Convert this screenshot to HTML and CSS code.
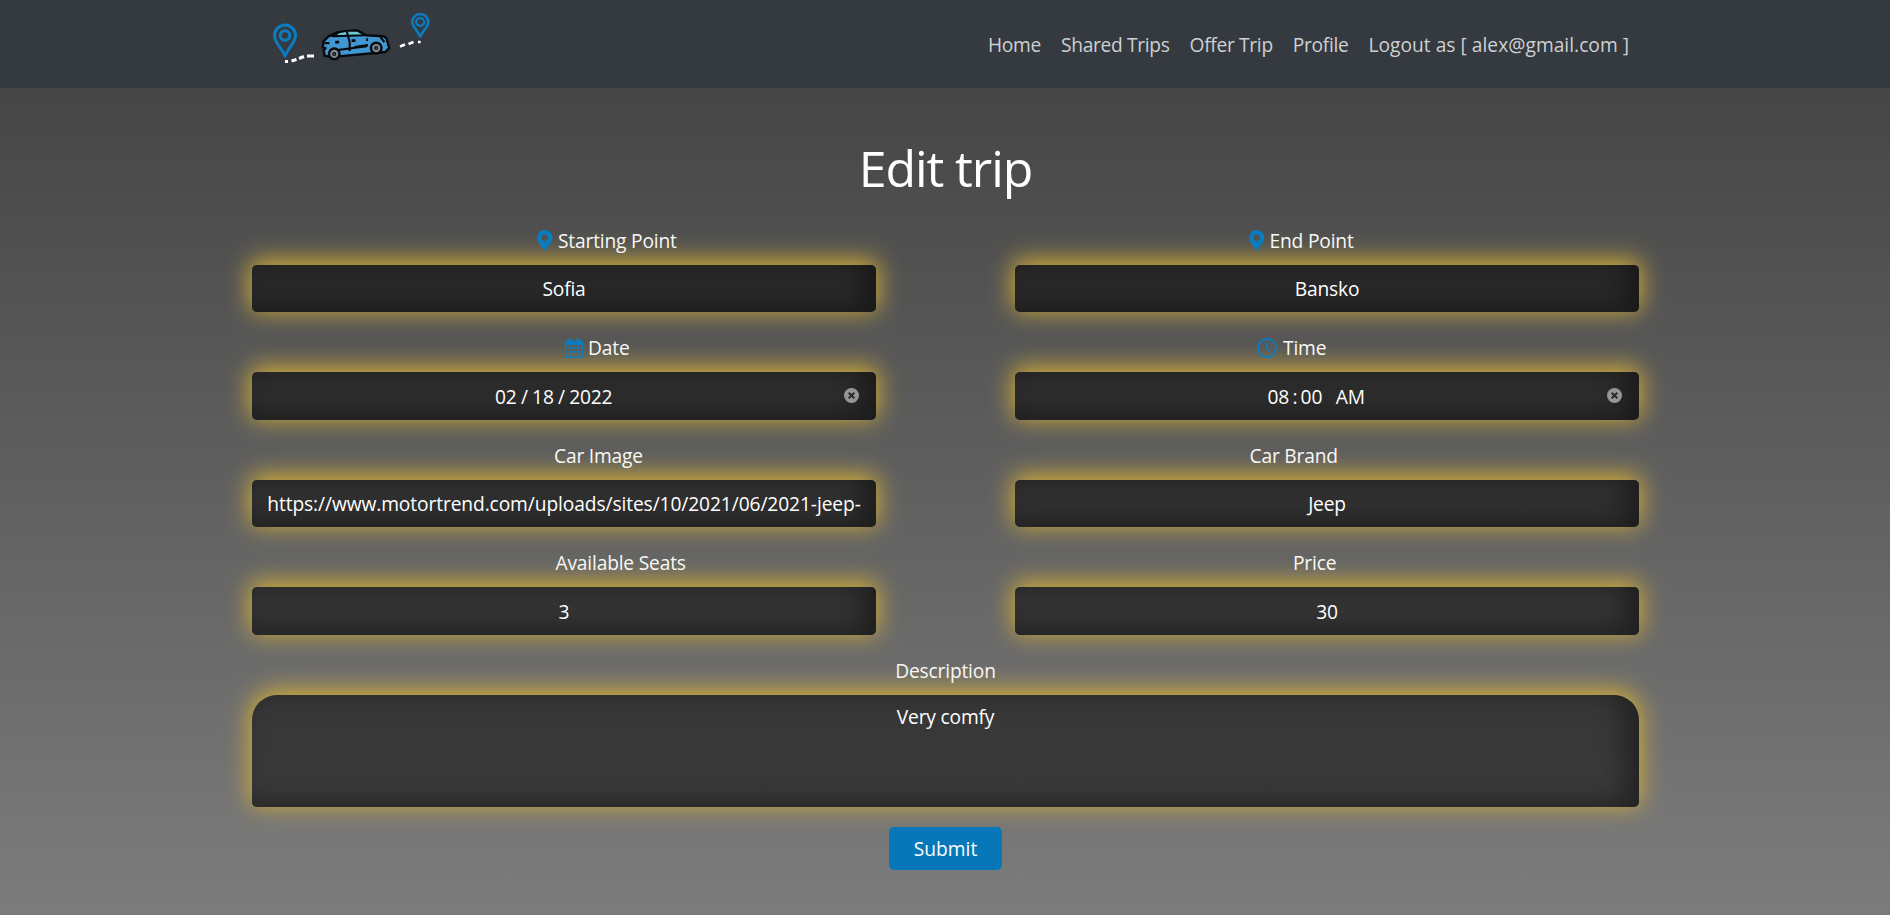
FILE: index.html
```
<!DOCTYPE html>
<html lang="en">
<head>
<meta charset="utf-8">
<title>Edit trip</title>
<link rel="stylesheet" href="styles.css">
</head>
<body>
<header class="header">
  <svg class="logo" width="170" height="70" viewBox="0 0 170 70">
    <g fill="none" stroke="#0a7dc2" stroke-width="3" stroke-linejoin="round">
      <path d="M15 56C12 48 4.500 43 4.500 35.500a10.500 10.500 0 0 1 21 0C25.500 43 18 48 15 56z"/>
      <circle cx="15" cy="35.500" r="4.800"/>
      <path stroke-width="2.600" d="M150.200 36.500C148 31 142.300 27 142.300 22a8 8 0 0 1 16 0C158.300 27 152.500 31 150.200 36.500z"/>
      <circle stroke-width="2.400" cx="150.200" cy="22" r="3.900"/>
    </g>
    <g fill="none" stroke="#fff" stroke-width="3">
      <path d="M15 61.500h3M21.500 61l5-1.500M29 58.500l5-2M37 56l7 0"/>
      <path stroke-width="2.600" d="M130 46.500l5-2M138.500 44l5-2M148 42h2.600"/>
    </g>
    <g stroke="#070b0f" stroke-width="2.500" stroke-linejoin="round" transform="translate(2.500 1) scale(.965 .98)">
      <path fill="#4296d1" d="M53 41l5-5 9-4 7-1 14-1 9 5 18 1 3 2 3 10-4 4-54 5-9-1-1-6 2-2-3-1z"/>
      <path fill="#68cbd0" stroke-width="2" d="M62 36l7-4 8-1.500 11-.3 8 4.800z"/>
      <path fill="none" stroke-width="2.200" d="M77 31l3 11v9M60 51l38-5M85 47l14-2M54 43h5M112 37l4 5"/>
      <path fill="none" stroke-width="2.800" d="M65 42h4M82 40.500h4M97 39.500h2"/>
      <circle cx="64" cy="54" r="5.500" fill="#7e8998"/>
      <circle cx="107.500" cy="48" r="5.500" fill="#7e8998"/>
      <circle cx="64" cy="54" r="1.300" fill="#fff" stroke-width="1.500"/>
      <circle cx="107.500" cy="48" r="1.300" fill="#fff" stroke-width="1.500"/>
    </g>
  </svg>
  <nav class="nav">
    <a>Home</a><a>Shared Trips</a><a>Offer Trip</a><a>Profile</a><a class="logout">Logout as [ alex@gmail.com ]</a>
  </nav>
</header>
<main class="page">
  <h1 class="title">Edit trip</h1>
  <form class="form">
    <div class="group">
      <label class="label start"><svg class="pin" viewBox="0 0 384 512"><path d="M172 502C27 291 0 269 0 192a192 192 0 1 1 384 0c0 77-27 99-172 310a24 24 0 0 1-40 0zM192 272a80 80 0 1 0 0-160 80 80 0 0 0 0 160z"/></svg><span>Starting Point</span></label>
      <div class="field">Sofia</div>
    </div>
    <div class="group">
      <label class="label end"><svg class="pin" viewBox="0 0 384 512"><path d="M172 502C27 291 0 269 0 192a192 192 0 1 1 384 0c0 77-27 99-172 310a24 24 0 0 1-40 0zM192 272a80 80 0 1 0 0-160 80 80 0 0 0 0 160z"/></svg><span>End Point</span></label>
      <div class="field">Bansko</div>
    </div>
    <div class="group">
      <label class="label date"><svg class="calendar" viewBox="0 0 18 20"><path fill-rule="evenodd" d="M4 0h2v2.500h6V0h2v2.500h2a2 2 0 0 1 2 2V18a2 2 0 0 1-2 2H2a2 2 0 0 1-2-2V4.500a2 2 0 0 1 2-2h2zM1.700 7v11.300h14.600V7z"/><path d="M4 8.500h2.600V11H4zM7.800 8.500h2.600V11H7.800zM11.600 8.500h2.600V11h-2.600zM4 12.500h2.600V15H4zM7.800 12.500h2.600V15H7.800zM11.600 12.500h2.600V15h-2.600z"/></svg><span>Date</span></label>
      <div class="field date-field"><span>02</span><i>/</i><span>18</span><i>/</i><span>2022</span><svg class="clear" viewBox="0 0 15 15"><circle cx="7.500" cy="7.500" r="7.500"/><path d="M4.700 4.700l5.600 5.600M10.300 4.700l-5.600 5.600"/></svg></div>
    </div>
    <div class="group">
      <label class="label time"><svg class="clock" viewBox="0 0 20 20"><circle cx="10" cy="10" r="9"/><path d="M10 4.300v6.200l3 2.700"/></svg><span>Time</span></label>
      <div class="field time-field"><span>08</span><i>:</i><span>00</span><span class="meridiem">AM</span><svg class="clear" viewBox="0 0 15 15"><circle cx="7.500" cy="7.500" r="7.500"/><path d="M4.700 4.700l5.600 5.600M10.300 4.700l-5.600 5.600"/></svg></div>
    </div>
    <div class="group">
      <label class="label image">Car Image</label>
      <div class="field url">https://www.motortrend.com/uploads/sites/10/2021/06/2021-jeep-</div>
    </div>
    <div class="group">
      <label class="label brand">Car Brand</label>
      <div class="field">Jeep</div>
    </div>
    <div class="group">
      <label class="label seats">Available Seats</label>
      <div class="field">3</div>
    </div>
    <div class="group">
      <label class="label price">Price</label>
      <div class="field">30</div>
    </div>
    <div class="group wide">
      <label class="label description">Description</label>
      <div class="field area">Very comfy</div>
    </div>
    <button class="submit" type="button">Submit</button>
  </form>
</main>
</body>
</html>
```
FILE: styles.css
```
* { box-sizing: border-box; }
body {
  margin: 0;
  height: 915px;
  overflow: hidden;
  font: 19.2px/30px "Open Sans", "Noto Sans", sans-serif;
  letter-spacing: -0.18px;
  color: #fff;
  background: linear-gradient(#404040, #7c7c7c) no-repeat;
}
.header {
  height: 88px;
  padding: 0 261px 0 270px;
  display: flex;
  justify-content: space-between;
  align-items: center;
  background: #343a40;
}
.logo { margin-bottom: 18px; }
.nav { display: flex; gap: 20px; color: #ced0d2; padding-top: 2px; letter-spacing: -0.32px; }
.nav a { white-space: nowrap; }
.nav .logout { letter-spacing: 0.02px; }
.page { width: 1387px; margin: 0 auto; position: relative; left: 0.5px; }
.title {
  margin: 0;
  padding-top: 48px;
  height: 136.500px;
  font-size: 50px;
  line-height: 64px;
  font-weight: 400;
  letter-spacing: -1.1px;
  text-align: center;
}
.form {
  display: grid;
  grid-template-columns: 624px 624px;
  justify-content: space-between;
  row-gap: 20px;
}
.label {
  display: flex;
  align-items: center;
  height: 30px;
  padding-top: 2px;
  margin-bottom: 10px;
  white-space: nowrap;
  color: #f8f8f6;
}
.label svg { flex: none; fill: #0a7dc0; }
.pin { width: 15.500px; height: 20.500px; margin-right: 5.500px; }
.calendar { width: 18px; height: 20px; margin-right: 5px; }
.clock { width: 20px; height: 20px; margin-right: 6px; }
.label .clock { fill: none; stroke: #0a7dc0; stroke-width: 1.900; }
.start { padding-left: 285px; }
.end { padding-left: 233.500px; }
.date { padding-left: 313px; }
.time { padding-left: 242px; }
.image { padding-left: 302px; }
.brand { padding-left: 234.500px; }
.seats { padding-left: 303.500px; }
.price { padding-left: 278px; }
.description { justify-content: center; }
.field {
  display: flex;
  justify-content: center;
  align-items: center;
  height: 47.500px;
  padding: 2px 15px 0;
  border-radius: 5px;
  background: rgba(0, 0, 0, 0.5);
  box-shadow: 0 -3px 25px 2px #d4af37, inset -14px -5px 27px rgba(0, 0, 0, 0.4);
  white-space: nowrap;
}
.field i { font-style: normal; }
.url { letter-spacing: -0.1px; }
.date-field, .time-field { justify-content: flex-start; }
.date-field { padding-left: 243px; }
.date-field i { width: 15.500px; text-align: center; }
.time-field { padding-left: 252.500px; }
.time-field i { width: 11.500px; text-align: center; }
.meridiem { margin-left: 13.500px; }
.clear { width: 15px; height: 15px; margin: -3px 2px 0 auto; fill: #969696; stroke: #2a2a2a; stroke-width: 2; }
.clear circle { stroke: none; }
.wide { grid-column: 1 / -1; }
.area {
  height: 112px;
  align-items: flex-start;
  padding-top: 7px;
  border-radius: 25px 25px 5px 5px;
}
.submit {
  grid-column: 1 / -1;
  justify-self: center;
  width: 113px;
  height: 43px;
  padding: 2px 0 0;
  border: 0;
  border-radius: 5px;
  background: #0678ba;
  color: #fff;
  font: inherit;
  letter-spacing: 0;
}
```
